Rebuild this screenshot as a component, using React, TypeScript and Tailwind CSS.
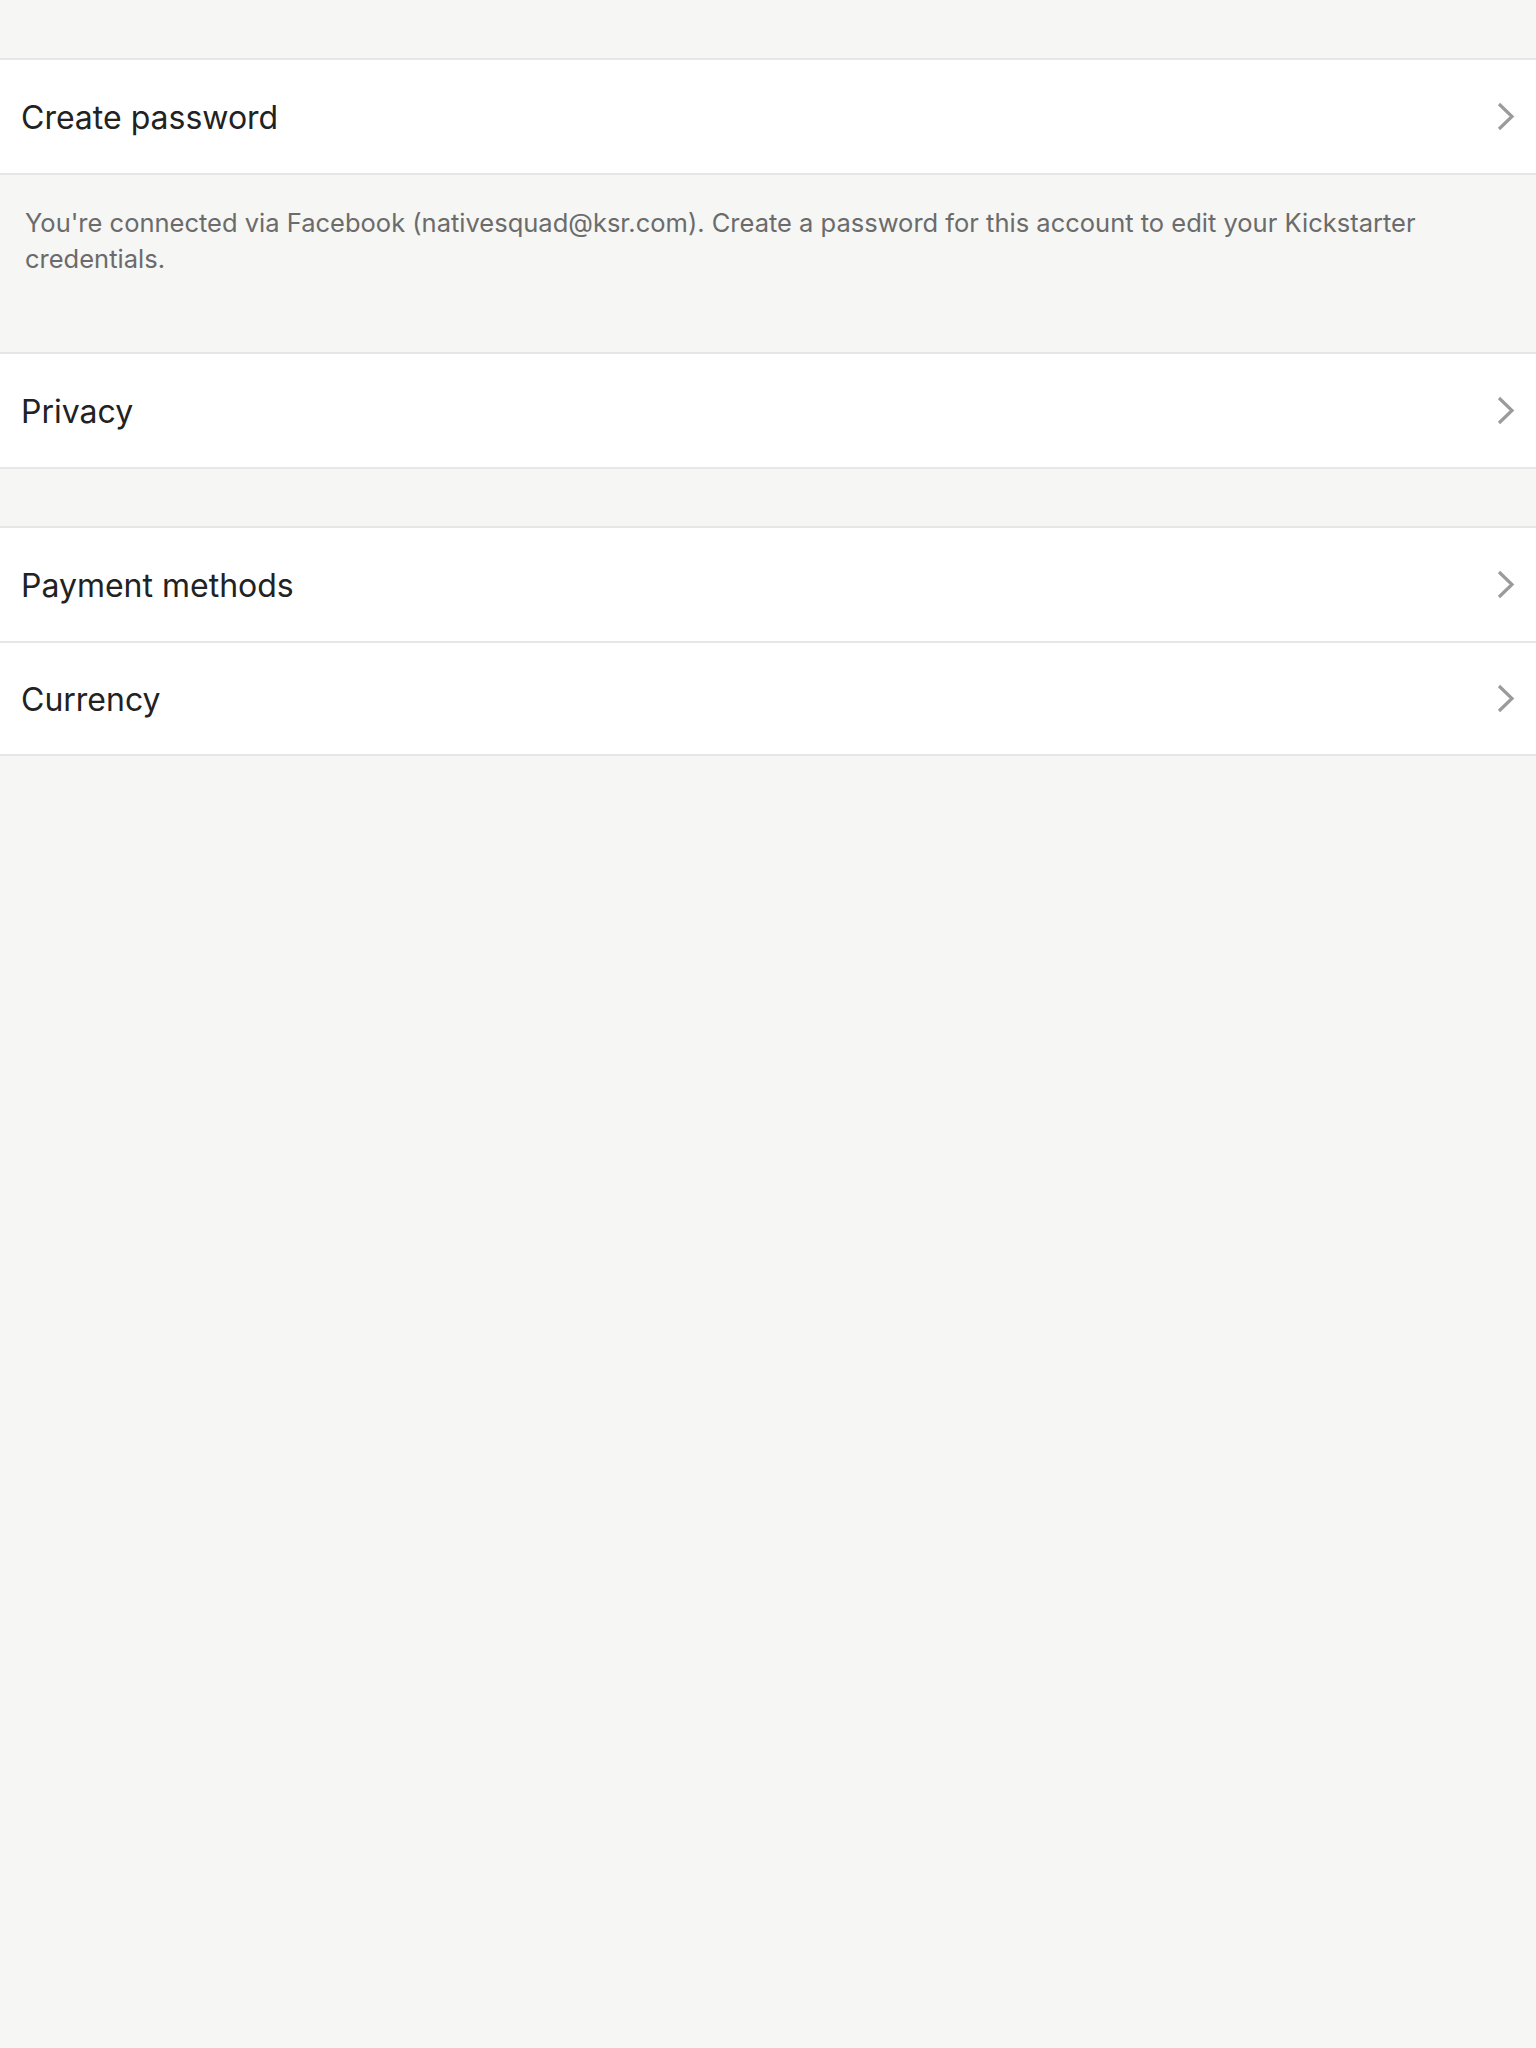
import React from "react";

const Chevron = () => (
  <svg width="18" height="29" viewBox="0 0 18 29" fill="none" className="shrink-0">
    <polyline points="2,2 15,14.5 2,27" stroke="#9b9b9b" strokeWidth="3.2" strokeLinecap="butt" strokeLinejoin="miter" />
  </svg>
);

const Row = ({ label, divider }: { label: string; divider?: boolean }) => (
  <div className={`flex h-[113px] items-center justify-between bg-white pl-[21px] pr-[21px] ${divider ? "border-t-2 border-[#e6e6e6]" : ""}`}>
    <span className="pt-[2px] text-[32px] text-[#222222]">{label}</span>
    <Chevron />
  </div>
);

export default function App() {
  return (
    <div className="min-h-[2048px] w-full bg-[#f6f6f4] pt-[58px]" style={{ fontFamily: "Inter, 'Noto Sans', sans-serif" }}>
      <div className="border-y-2 border-[#e6e6e6]">
        <Row label="Create password" />
      </div>
      <div className="h-[177px] pl-[25px] pr-[25px] pt-[30px]">
        <p className="text-[25.5px] leading-[36px] text-[#6b6b6b]">
          You're connected via Facebook (nativesquad@ksr.com). Create a password for this account to edit your Kickstarter credentials.
        </p>
      </div>
      <div className="border-y-2 border-[#e6e6e6]">
        <Row label="Privacy" />
      </div>
      <div className="h-[57px]" />
      <div className="border-y-2 border-[#e6e6e6]">
        <Row label="Payment methods" />
        <Row label="Currency" divider />
      </div>
    </div>
  );
}
